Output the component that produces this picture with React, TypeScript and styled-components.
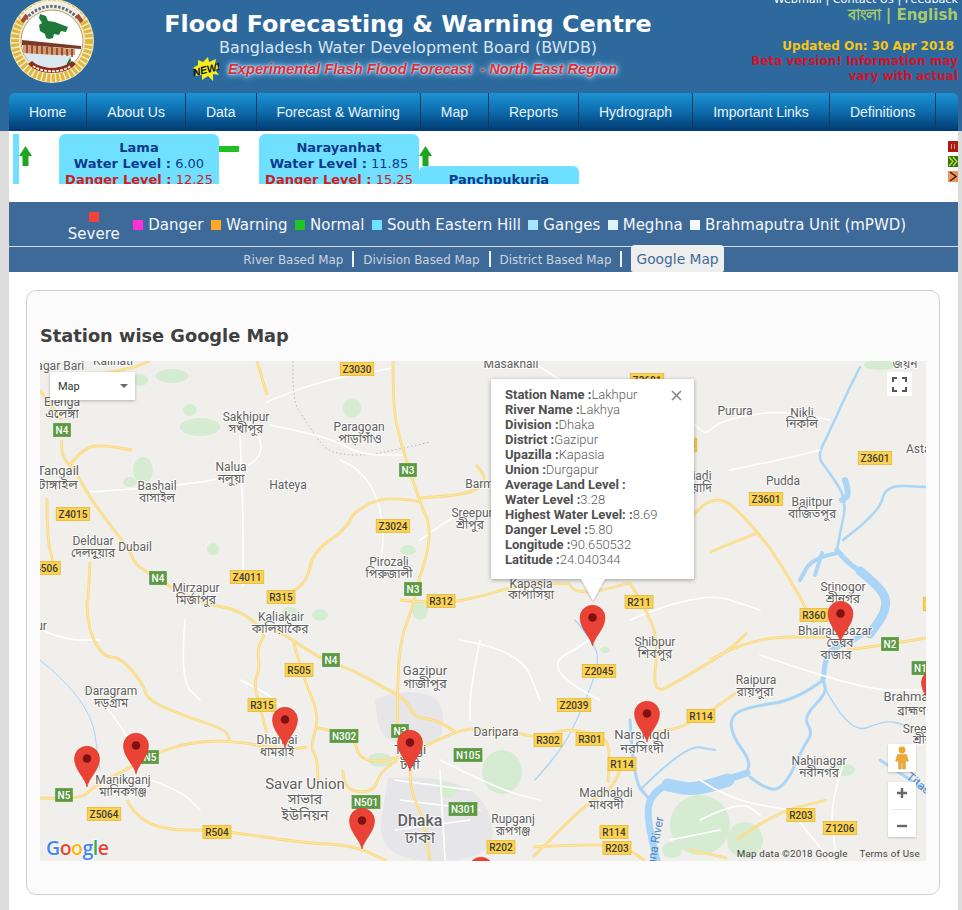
import React from 'react'
import styled, { createGlobalStyle } from 'styled-components'

const GlobalStyle = createGlobalStyle`
  html, body { margin: 0; padding: 0; background: #dcdcdc; }
  body { font-family: "DejaVu Sans", "Noto Sans", sans-serif; }
`

const Page = styled.div`
  width: 962px;
  height: 910px;
  overflow: hidden;
`

const Header = styled.header`
  height: 131px;
  background: #2d699d;
  padding: 0 4px 0 9px;
  box-sizing: border-box;
`

const Banner = styled.div`
  height: 93px;
  display: grid;
  grid-template-columns: 155px 488px 1fr;
  overflow: hidden;
`

const LogoBox = styled.div`
  margin-top: -1px;
`

const TitleBlock = styled.div`
  text-align: center;
  white-space: nowrap;
`

const Title = styled.h1`
  margin: 9px 0 0;
  font-size: 23.8px;
  line-height: 30px;
  font-weight: bold;
  color: #fff;
`

const Subtitle = styled.div`
  font-size: 16px;
  line-height: 18px;
  color: #d8e6f3;
`

const FlashRow = styled.div`
  display: flex;
  align-items: center;
  margin: 0 0 0 29px;
`

const FlashText = styled.span`
  margin-left: 8px;
  font-family: "Liberation Sans", Arial, sans-serif;
  font-size: 14.7px;
  font-weight: bold;
  font-style: italic;
  white-space: pre;
  color: #d5303c;
  text-shadow: 0 0 2px #fff, 0 0 5px #cfe8ff, 0 0 9px #6cc0ff;
`

const SideBlock = styled.div`
  text-align: right;
  font-weight: bold;
  white-space: nowrap;
`

const TopLinks = styled.div`
  margin-top: -7px;
  height: 13px;
  font-size: 11.2px;
  font-weight: normal;
  line-height: 13px;
  color: #fff;
`

const LangLinks = styled.div`
  font-size: 15px;
  line-height: 19px;
  color: #a8c96f;
`

const Updated = styled.div`
  margin-top: 14px;
  padding-right: 4px;
  font-size: 12px;
  line-height: 15px;
  color: #f5c518;
`

const Beta = styled.div`
  width: 212px;
  margin-left: auto;
  font-size: 12px;
  line-height: 15px;
  white-space: normal;
  color: #d0142c;
`

const Nav = styled.nav`
  height: 38px;
  display: flex;
  border-radius: 6px 6px 0 0;
  background: linear-gradient(to bottom, #1b93d3 0%, #0f6fb0 45%, #013a70 100%);
`

const NavItem = styled.a`
  padding: 0 20px;
  display: flex;
  align-items: center;
  border-right: 1px solid #0b3a62;
  font-family: "Liberation Sans", Arial, sans-serif;
  font-size: 14px;
  color: #e8f4fc;
  box-sizing: border-box;
  height: 38px;
`

const Content = styled.main`
  margin: 0 4px 0 9px;
  height: 779px;
  background: #fff;
`

const TickerStrip = styled.div`
  height: 71px;
  padding: 3px 0 0 4px;
  box-sizing: border-box;
  display: flex;
  justify-content: space-between;
`

const TickerClip = styled.div`
  height: 50px;
  width: 900px;
  overflow: hidden;
  display: flex;
  align-items: flex-start;
`

const Sliver = styled.div`
  width: 6px;
  height: 50px;
  background: #6fe0ff;
`

const StationCard = styled.div<{ $drop?: boolean; $pull?: boolean }>`
  flex: none;
  width: 160px;
  height: 60px;
  border-radius: 6px 6px 0 0;
  background: #6fe0ff;
  text-align: center;
  font-size: 13px;
  line-height: 16px;
  margin-top: ${(p) => (p.$drop ? '32px' : '0')};
  margin-left: ${(p) => (p.$pull ? '-12px' : '0')};
  padding-top: 6px;
  box-sizing: border-box;
`

const StationName = styled.div`
  font-weight: bold;
  color: #0b3a8c;
`

const LevelLine = styled.div<{ $danger?: boolean }>`
  color: ${(p) => (p.$danger ? '#d31c1c' : '#0b3a8c')};
  white-space: nowrap;
  b { font-weight: bold; }
`

const TrendSlot = styled.div<{ $w: number }>`
  flex: none;
  width: ${(p) => p.$w}px;
  padding-top: 12px;
  position: relative;
  z-index: 1;
  svg { display: block; }
`

const TickerButtons = styled.div`
  width: 10px;
  padding-top: 7px;
  display: flex;
  flex-direction: column;
  gap: 4px;
`

const TickerButton = styled.div<{ $bg: string }>`
  width: 10px;
  height: 11px;
  background: ${(p) => p.$bg};
  overflow: hidden;
  svg { display: block; }
`

const LegendBar = styled.div`
  background: #3e6a9a;
  height: 70px;
`

const LegendRow = styled.div`
  height: 43px;
  padding: 1px 0 0 7px;
  border-bottom: 1px solid #d3dce6;
  display: flex;
  justify-content: center;
  align-items: center;
  gap: 7.5px;
  font-size: 15px;
  color: #f4f7fa;
  white-space: nowrap;
`

const SevereItem = styled.div`
  display: flex;
  flex-direction: column;
  align-items: center;
  gap: 3px;
  margin: 5px 6px 0 0;
  line-height: 18px;
`

const LegendItem = styled.div`
  display: flex;
  align-items: center;
  gap: 5px;
`

const Swatch = styled.span<{ $color: string }>`
  width: 10px;
  height: 10px;
  background: ${(p) => p.$color};
  display: block;
`

const SubNav = styled.div`
  height: 25px;
  display: flex;
  justify-content: center;
  align-items: flex-end;
  white-space: nowrap;
`

const SubLink = styled.a`
  font-size: 11.9px;
  line-height: 26px;
  color: #ccd5de;
  height: 25px;
`

const SubDivider = styled.span`
  width: 2px;
  height: 16px;
  background: #f0f4f8;
  margin: 0 9px 5px;
`

const ActiveTab = styled.a`
  height: 27px;
  padding: 0 5px;
  line-height: 28px;
  font-size: 13.8px;
  color: #3e6a9a;
  background: #eeeeee;
  border-radius: 4px 4px 2px 2px;
`

const Panel = styled.section`
  margin: 18px 18px 0 17px;
  height: 605px;
  box-sizing: border-box;
  border: 1px solid #cfcfcf;
  border-radius: 10px;
  background: #fbfbfb;
  padding: 0 13px;
`

const PanelTitle = styled.h2`
  margin: 0;
  padding-top: 33px;
  height: 70px;
  box-sizing: border-box;
  font-size: 17.8px;
  line-height: 24px;
  font-weight: bold;
  color: #404040;
`

const MapFrame = styled.div`
  position: relative;
  width: 886px;
  height: 500px;
  overflow: hidden;
  background: #f0efeb;
  font-family: Roboto, "Noto Sans", sans-serif;
`

const MapSvg = styled.svg`
  display: block;
`

const PlaceLabel = styled.text<{ $size?: number; $weight?: number; $water?: boolean }>`
  font-family: Roboto, "Noto Sans", "Noto Sans Bengali", sans-serif;
  font-size: ${(p) => p.$size || 12}px;
  font-weight: ${(p) => p.$weight || 400};
  fill: ${(p) => (p.$water ? '#4f86c6' : '#606060')};
  stroke: #fff;
  stroke-width: ${(p) => (p.$water ? 0 : 2)}px;
  stroke-opacity: 0.75;
  paint-order: stroke;
  text-anchor: middle;
  dominant-baseline: middle;
`

const ShieldText = styled.text<{ $light?: boolean }>`
  font-family: Roboto, sans-serif;
  font-size: 10px;
  font-weight: 500;
  fill: ${(p) => (p.$light ? '#fff' : '#3b3b3b')};
  text-anchor: middle;
  dominant-baseline: central;
`

const GoogleLogo = styled.text`
  font-family: "Open Sans", Roboto, sans-serif;
  font-size: 19.5px;
  font-weight: 600;
  letter-spacing: -0.5px;
  stroke: #fff;
  stroke-width: 2px;
  stroke-opacity: 0.6;
  paint-order: stroke;
`

const MapTypeButton = styled.div`
  position: absolute;
  left: 10px;
  top: 11px;
  width: 85px;
  height: 28px;
  padding: 0 8px;
  box-sizing: border-box;
  background: #fff;
  box-shadow: 0 1px 3px rgba(0, 0, 0, 0.25);
  display: flex;
  align-items: center;
  justify-content: space-between;
  font-size: 11px;
  color: #333;
`

const Caret = styled.span`
  margin-right: -1px;
  border-left: 4px solid transparent;
  border-right: 4px solid transparent;
  border-top: 4px solid #666;
`

const FullscreenButton = styled.div`
  position: absolute;
  left: 847px;
  top: 11px;
  width: 25px;
  height: 24px;
  background: #fff;
  display: flex;
  align-items: center;
  justify-content: center;
`

const Popup = styled.div`
  position: absolute;
  left: 451px;
  top: 18px;
  width: 203px;
  height: 200px;
  box-sizing: border-box;
  padding: 8px 14px;
  background: #fff;
  border-radius: 1px;
  box-shadow: 0 1px 4px rgba(0, 0, 0, 0.35);
  font-size: 13px;
  font-weight: 300;
  line-height: 15px;
  color: #5c5c5c;
  white-space: nowrap;

  &::after {
    content: '';
    position: absolute;
    left: 90px;
    bottom: -22px;
    border-left: 12px solid transparent;
    border-right: 12px solid transparent;
    border-top: 22px solid #fff;
    filter: drop-shadow(0 1px 1px rgba(0, 0, 0, 0.25));
  }

  b {
    font-weight: 700;
    color: #505050;
  }
`

const PopupClose = styled.svg`
  position: absolute;
  right: 12px;
  top: 11px;
`

const PegmanBox = styled.div`
  position: absolute;
  left: 848px;
  top: 383px;
  width: 28px;
  height: 28px;
  background: #fff;
  box-shadow: 0 1px 2px rgba(0, 0, 0, 0.2);
  display: flex;
  align-items: center;
  justify-content: center;
`

const ZoomBox = styled.div`
  position: absolute;
  left: 848px;
  top: 421px;
  width: 28px;
  height: 55px;
  background: #fff;
  box-shadow: 0 1px 2px rgba(0, 0, 0, 0.2);
  display: flex;
  flex-direction: column;
  align-items: center;
  justify-content: space-around;
`

const ZoomDivider = styled.div`
  width: 20px;
  height: 1px;
  background: #e6e6e6;
`

const Attribution = styled.div`
  position: absolute;
  right: 6px;
  bottom: 0;
  display: flex;
  gap: 12px;
  font-size: 9.8px;
  line-height: 14px;
  letter-spacing: 0.2px;
  color: #444;
  white-space: nowrap;
`

// page coordinates, the map group is shifted by the map's own offset
type Pts = number[]

const smooth = (p: Pts) => {
  let d = `M${p[0]} ${p[1]}`
  for (let i = 2; i < p.length - 2; i += 2) {
    const mx = (p[i] + p[i + 2]) / 2
    const my = (p[i + 1] + p[i + 3]) / 2
    d += ` Q${p[i]} ${p[i + 1]} ${mx} ${my}`
  }
  return `${d} L${p[p.length - 2]} ${p[p.length - 1]}`
}

const majorRoads: Pts[] = [
  [393, 361, 393, 408, 400, 440, 410, 472, 420, 502, 430, 525, 428, 552, 417, 585, 413, 607, 400, 640, 397, 700, 398, 730],
  [420, 502, 387, 495, 353, 512, 347, 528, 313, 552, 307, 582, 287, 595],
  [62, 440, 60, 455, 75, 470, 88, 495, 110, 525, 130, 550, 135, 565, 158, 578, 175, 590, 205, 604, 240, 610, 267, 633, 257, 647, 260, 670, 253, 683, 267, 733],
  [267, 625, 293, 640, 323, 660, 353, 670, 383, 687, 407, 700, 413, 717, 437, 720, 457, 733],
  [293, 640, 303, 677, 320, 717, 310, 747, 317, 757, 318, 780],
  [317, 728, 353, 733, 360, 762, 397, 760, 437, 740, 467, 728, 490, 730, 518, 733],
  [40, 798, 80, 800, 93, 787, 125, 770, 157, 753, 187, 743, 227, 740, 287, 750, 307, 747],
  [87, 600, 87, 627, 103, 657, 120, 657, 143, 683, 147, 700, 187, 717, 227, 730, 230, 743],
  [127, 800, 133, 813, 160, 830, 220, 830, 303, 843, 353, 845, 387, 861],
  [410, 770, 410, 790, 423, 817, 430, 861],
  [343, 770, 343, 790, 373, 793, 380, 773, 397, 760],
  [630, 583, 653, 620, 657, 650, 653, 695, 680, 680, 727, 652, 747, 633],
  [690, 520, 713, 487, 757, 530, 783, 567, 807, 610, 813, 623],
  [710, 552, 757, 533],
  [710, 660, 750, 637, 827, 637],
  [847, 650, 890, 644, 926, 638],
  [400, 600, 440, 604, 480, 597, 510, 587, 570, 582, 572, 590, 590, 593, 630, 583],
  [737, 692, 693, 725, 653, 733],
  [518, 733, 540, 740, 565, 728, 600, 735, 610, 745, 608, 783],
  [623, 763, 613, 790, 590, 800, 533, 857],
  [533, 847, 603, 843, 630, 850, 645, 861],
  [737, 840, 773, 813, 827, 800],
  [690, 850, 727, 858],
  [257, 361, 267, 395],
  [100, 374, 133, 368, 150, 361],
  [40, 390, 43, 395, 62, 420],
  [70, 465, 83, 448, 103, 445, 132, 450],
  [47, 498, 47, 538, 53, 562],
  [90, 562, 88, 600],
  [476, 465, 490, 480, 470, 494, 420, 498],
]

const minorRoads: Pts[] = [
  [267, 402, 313, 382, 393, 368],
  [240, 435, 243, 500, 243, 585],
  [250, 425, 270, 448, 237, 475, 187, 485, 90, 492],
  [270, 425, 330, 437, 360, 455, 405, 455],
  [340, 460, 365, 470, 385, 520, 380, 570],
  [420, 540, 460, 510, 490, 510],
  [680, 400, 700, 440, 720, 420, 780, 410, 830, 420],
  [730, 470, 780, 460, 820, 450],
  [630, 620, 700, 590, 760, 610],
  [600, 700, 540, 670, 590, 640],
  [300, 730, 280, 700, 240, 680],
  [100, 700, 130, 735, 130, 760],
  [150, 780, 180, 790, 200, 810],
  [185, 620, 180, 680, 200, 700],
  [460, 640, 520, 650, 540, 700],
  [440, 760, 500, 790, 540, 800],
  [790, 810, 830, 860],
  [700, 780, 730, 800, 790, 810],
  [760, 655, 860, 690, 920, 690],
  [845, 760, 830, 800, 835, 850],
  [20, 620, 60, 640, 100, 640],
  [395, 780, 470, 790],
  [400, 800, 480, 810],
  [395, 830, 470, 820],
  [440, 770, 445, 860],
  [480, 640, 470, 690, 470, 720],
  [700, 820, 740, 800, 760, 815],
  [670, 840, 720, 830],
  [560, 380, 530, 360],
]

const rivers: { p: Pts; w: number }[] = [
  { p: [837, 550, 847, 563, 870, 577, 890, 597, 880, 623, 850, 643, 827, 650, 823, 680], w: 5 },
  { p: [860, 571, 884, 590, 887, 610, 870, 634], w: 9 },
  { p: [823, 680, 797, 700, 747, 707, 730, 717, 733, 737, 750, 760, 747, 773], w: 3 },
  { p: [747, 773, 697, 790, 667, 783, 650, 797, 647, 817, 657, 861], w: 7 },
  { p: [728, 780, 697, 791, 668, 785], w: 13 },
  { p: [750, 777, 770, 793, 787, 783, 803, 747, 813, 733, 803, 717, 827, 693, 823, 680], w: 3 },
  { p: [837, 550, 840, 533, 847, 500, 830, 473, 817, 457, 827, 437, 847, 393, 860, 367], w: 2.5 },
  { p: [837, 553, 812, 558, 800, 580], w: 4 },
  { p: [815, 575, 822, 553], w: 4 },
  { p: [843, 540, 880, 512, 885, 485, 926, 487], w: 2.5 },
  { p: [640, 790, 685, 745, 715, 750], w: 2 },
  { p: [826, 690, 850, 735, 885, 720, 905, 725], w: 1.5 },
  { p: [630, 720, 633, 780, 650, 800], w: 3 },
  { p: [575, 620, 592, 640, 600, 661, 586, 700, 565, 745, 535, 780], w: 1.2 },
  { p: [40, 660, 90, 700, 100, 770], w: 1 },
  { p: [880, 760, 926, 790], w: 3 },
  { p: [845, 480, 850, 495, 842, 500], w: 6 },
]

const greens: [number, number, number, number][] = [
  [172, 376, 16, 7], [140, 380, 8, 6], [200, 427, 20, 9], [190, 410, 7, 6], [143, 470, 10, 13], [130, 482, 7, 5],
  [352, 408, 9, 10], [213, 549, 6, 6], [408, 550, 8, 5], [320, 615, 8, 6],
  [420, 610, 8, 10], [90, 690, 6, 4], [380, 760, 12, 7], [502, 772, 20, 22],
  [700, 825, 30, 30], [745, 840, 18, 18], [672, 850, 10, 8], [845, 770, 10, 6],
  [605, 650, 5, 3], [448, 790, 10, 8], [880, 365, 16, 5], [290, 612, 8, 5],
]

const urban: Pts[] = [
  [375, 700, 395, 690, 440, 695, 445, 730, 430, 750, 380, 740],
  [388, 778, 440, 775, 490, 800, 495, 861, 375, 861],
]

const places: [string, number, number, number?, number?][] = [
  ['Nagar Bari', 56, 367], ['Kalihati', 113, 362],
  ['Elenga', 62, 403], ['এলেঙ্গা', 62, 415],
  ['Sakhipur', 246, 418], ['সখীপুর', 246, 430],
  ['Paragoan', 359, 428], ['পাড়াগাঁও', 360, 440],
  ['Barmi', 481, 485], ['Tangail', 58, 472, 13], ['টাঙ্গাইল', 58, 486, 13],
  ['Nalua', 231, 468], ['নলুয়া', 231, 480], ['Hateya', 288, 486],
  ['Bashail', 157, 487], ['বাসাইল', 157, 499],
  ['Sreepur', 472, 514], ['শ্রীপুর', 470, 526],
  ['Delduar', 93, 542], ['দেলদুয়ার', 93, 554], ['Dubail', 135, 548],
  ['Pirozali', 389, 563], ['পিরুজালী', 389, 575],
  ['Mirzapur', 196, 589], ['মির্জাপুর', 196, 601],
  ['Nagarpur', 22, 627], ['Kaliakair', 281, 618], ['কালিয়াকৈর', 280, 630],
  ['Gazipur', 425, 672, 13], ['গাজীপুর', 425, 685, 13],
  ['Daragram', 111, 692], ['দড়গ্রাম', 111, 704],
  ['Daripara', 496, 733], ['Dhanrai', 277, 741], ['ধামরাই', 277, 753],
  ['Tongi', 410, 751, 13], ['টঙ্গী', 410, 766, 13],
  ['Manikganj', 123, 781], ['মানিকগঞ্জ', 123, 793],
  ['Savar Union', 305, 785, 15], ['সাভার', 305, 800, 14], ['ইউনিয়ন', 305, 816, 14],
  ['Dhaka', 420, 822, 16, 500], ['ঢাকা', 420, 839, 16],
  ['Masakhali', 511, 365], ['জয়ন', 905, 365],
  ['Purura', 735, 412], ['Nikli', 802, 414], ['নিকলি', 802, 425],
  ['Astagram', 932, 450], ['Katiadi', 693, 477], ['কটিয়াদি', 692, 489],
  ['Pudda', 783, 482], ['Bajitpur', 812, 503], ['বাজিতপুর', 812, 515],
  ['Kapasia', 531, 585], ['কাপাসিয়া', 531, 596],
  ['Srinogor', 843, 588], ['শ্রীনগর', 843, 600],
  ['Bhairab Bazar', 835, 632], ['ভৈরব', 840, 644], ['বাজার', 836, 656],
  ['Shibpur', 655, 643], ['শিবপুর', 655, 655],
  ['Raipura', 756, 681], ['রায়পুরা', 755, 693],
  ['Brahmanbaria', 924, 698, 13], ['ব্রাহ্মণবাড়িয়া', 928, 712],
  ['Sreenagar', 930, 730], ['শ্রীনগর', 930, 741],
  ['Narsingdi', 642, 736, 13], ['নরসিংদী', 642, 750, 13],
  ['Nabinagar', 819, 762], ['নবীনগর', 819, 774],
  ['Madhabdi', 606, 794], ['মাধবদী', 606, 806],
  ['Rupganj', 513, 820], ['রূপগঞ্জ', 513, 832],
]

const yellowShields: [string, number, number][] = [
  ['Z3030', 357, 369], ['Z4015', 73, 514], ['Z3024', 393, 526], ['Z4506', 43.5, 568],
  ['Z4011', 247, 577], ['R315', 281, 597], ['R312', 441, 601], ['R505', 299, 670],
  ['R315', 262, 705], ['Z5064', 104, 814], ['R504', 217, 832], ['Z3601', 875, 458],
  ['Z3601', 766, 499], ['R211', 639, 602], ['R360', 814, 615], ['Z2045', 599, 671],
  ['Z2039', 574, 705], ['R114', 701, 716], ['R302', 548, 740], ['R301', 590, 739],
  ['R114', 622, 764], ['R203', 801, 815], ['Z1206', 840, 828], ['R114', 614, 832],
  ['R203', 617, 848], ['R202', 501, 847], ['Z3601', 647, 380], ['Z3601', 940, 604],
  ['Z3024', 680, 445],
]

const greenShields: [string, number, number][] = [
  ['N4', 62, 430], ['N3', 408, 470], ['N4', 158, 578], ['N3', 413, 589],
  ['N4', 331, 660], ['N302', 344, 736], ['N3', 400, 731], ['N105', 468, 755],
  ['N5', 150, 757], ['N5', 64, 795], ['N501', 366, 802], ['N301', 463, 809],
  ['N2', 890, 644], ['N102', 926, 668],
]

const pinSpots: [number, number][] = [
  [592.5, 646], [840.5, 642], [285, 748], [410, 771], [362, 849],
  [136, 774], [87, 787], [647, 742], [934, 711], [481, 898],
]

const Shield = ({ label, x, y, green }: { label: string; x: number; y: number; green?: boolean }) => {
  const w = label.length * 5.6 + 5.5
  return (
    <g>
      <rect
        x={x - w / 2}
        y={y - 6.5}
        width={w}
        height={13}
        fill={green ? '#5c9a44' : '#fdd24f'}
        stroke={green ? '#5c9a44' : '#e0b93c'}
        strokeWidth={0.8}
      />
      <ShieldText x={x} y={y} $light={green}>
        {label}
      </ShieldText>
    </g>
  )
}

const Pin = ({ x, y }: { x: number; y: number }) => (
  <g transform={`translate(${x} ${y})`}>
    <path
      d="M0 0C-1.6-9-12.5-17-12.5-28.3A12.5 12.5 0 1 1 12.5-28.3C12.5-17 1.6-9 0 0Z"
      fill="#ea4335"
      stroke="#d23a2d"
      strokeWidth={0.6}
    />
    <circle cx={0} cy={-28.5} r={4.3} fill="#7e1210" />
  </g>
)

const MapCanvas = () => (
  <MapSvg width={886} height={500} viewBox="40 361 886 500">
    <rect x={40} y={361} width={886} height={500} fill="#f0efeb" />
    {urban.map((u, i) => (
      <path key={i} d={smooth([...u, u[0], u[1]])} fill="#e6e6e8" />
    ))}
    {greens.map(([cx, cy, rx, ry], i) => (
      <ellipse key={i} cx={cx} cy={cy} rx={rx} ry={ry} fill="#d6ecd2" />
    ))}
    {rivers.map((r, i) => (
      <path key={i} d={smooth(r.p)} fill="none" stroke="#aad5f6" strokeWidth={r.w} strokeLinecap="round" />
    ))}
    <path
      d={smooth([293, 361, 292, 400, 305, 420, 325, 450, 345, 455, 370, 455, 395, 450, 430, 442])}
      fill="none"
      stroke="#b5b2aa"
      strokeWidth={1}
      strokeDasharray="1.5 2.5"
    />
    {minorRoads.map((r, i) => (
      <path key={i} d={smooth(r)} fill="none" stroke="#fff" strokeWidth={1.6} strokeLinecap="round" />
    ))}
    {majorRoads.map((r, i) => (
      <path key={i} d={smooth(r)} fill="none" stroke="#fbd97f" strokeWidth={2.8} strokeLinejoin="round" />
    ))}
    {majorRoads.map((r, i) => (
      <path key={i} d={smooth(r)} fill="none" stroke="#fdeab4" strokeWidth={0.8} strokeLinejoin="round" />
    ))}
    {places.map(([name, x, y, size, weight], i) => (
      <PlaceLabel key={i} x={x} y={y} $size={size} $weight={weight}>
        {name}
      </PlaceLabel>
    ))}
    <PlaceLabel x={654} y={853} transform="rotate(-80 654 853)" $water>
      Meghna River
    </PlaceLabel>
    <PlaceLabel x={918} y={784} transform="rotate(38 918 784)" $water>
      Titas
    </PlaceLabel>
    {yellowShields.map(([label, x, y], i) => (
      <Shield key={i} label={label} x={x} y={y} />
    ))}
    {greenShields.map(([label, x, y], i) => (
      <Shield key={i} label={label} x={x} y={y} green />
    ))}
    {pinSpots.map(([x, y], i) => (
      <Pin key={i} x={x} y={y} />
    ))}
    <GoogleLogo x={46} y={855}>
      <tspan fill="#4285f4">G</tspan>
      <tspan fill="#ea4335">o</tspan>
      <tspan fill="#fbbc05">o</tspan>
      <tspan fill="#4285f4">g</tspan>
      <tspan fill="#34a853">l</tspan>
      <tspan fill="#ea4335">e</tspan>
    </GoogleLogo>
  </MapSvg>
)

const LogoMark = () => (
  <svg width={86} height={84} viewBox="0 0 86 84">
    <circle cx={43} cy={42} r={42} fill="#f3e9c4" />
    <circle cx={43} cy={42} r={37} fill="none" stroke="#dfb63e" strokeWidth={8} strokeDasharray="3 1.6" />
    <path d="M14 21A35 35 0 0 1 72 21" stroke="#f4efe0" strokeWidth={8} fill="none" />
    <path d="M17 20A33 33 0 0 1 69 20" stroke="#5a6e8a" strokeWidth={3} fill="none" strokeDasharray="2.5 1.5" />
    <path d="M13 23l5-7M73 23l-5-7" stroke="#a84a32" strokeWidth={4} />
    <circle cx={43} cy={42} r={31} fill="#fff" stroke="#a08a5a" strokeWidth={0.8} />
    <path d="M31 15l6 2 2 5 7 1 5 2 8 3-2 5-5-1-2 4-5-1-1 4-4 1-3-1-1-4-5-3-1-6 3-2-3-5z" fill="#1f7a3a" />
    <path d="M58 56l3 1 1 5-3 5-3-4z" fill="#1f7a3a" />
    <path d="M13 41L72 47V50L13 46z" fill="#7a3a28" />
    <path d="M14 46L66 50V56H14z" fill="#d49a70" />
    <path d="M18 46v9M23 46v9M28 47v9M33 47v9M38 48v8M43 48v8M48 49v8M53 49v8M58 50v8M63 50v8" stroke="#8a3e2a" strokeWidth={1.6} />
    <path d="M14 54L62 57 56 68H24z" fill="#dbe7ee" />
    <path d="M19 65C30 77 56 77 67 65L63 62C54 71 32 71 23 62z" fill="#8a2c1c" />
    <path d="M24 67C34 74 52 74 62 67" stroke="#f2e6d8" strokeWidth={2} fill="none" strokeDasharray="3 1" />
  </svg>
)

const NewBadge = () => (
  <svg width={27} height={24} viewBox="0 0 27 24">
    <polygon
      points="5,3 10,5 15,0 16,5 23,2 22,7 27,10 22,13 26,18 20,17 20,24 15,19 9,23 9,18 2,19 5,14 0,11 5,8"
      fill="#f5ef20"
    />
    <text x={13.5} y={16} textAnchor="middle" fontFamily="Liberation Sans" fontSize={10.5} fontWeight={700} fontStyle="italic" transform="rotate(-14 14 13)" fill="#111">
      NEW!
    </text>
  </svg>
)

const UpArrow = () => (
  <svg width={13} height={20} viewBox="0 0 13 20">
    <path d="M6.5 0L13 10H9.5V20H3.5V10H0Z" fill="#1fa51f" />
  </svg>
)

const FlatMark = () => (
  <svg width={20} height={6} viewBox="0 0 20 6">
    <rect width={20} height={6} fill="#21c021" />
  </svg>
)

const Pegman = () => (
  <svg width={14} height={24} viewBox="0 0 14 24">
    <circle cx={7} cy={4} r={3.4} fill="#f5a623" />
    <path d="M2.5 8.5h9l2 6.5-1.8.6-1.2-3v10.4H7.6v-6H6.4v6H3.5V12.6l-1.2 3L.5 15z" fill="#f5a623" stroke="#b8a070" strokeWidth={0.5} />
  </svg>
)

const stations = [
  { name: 'Lama', water: '6.00', danger: '12.25' },
  { name: 'Narayanhat', water: '11.85', danger: '15.25' },
]

const StationBody = ({ name, water, danger }: { name: string; water: string; danger: string }) => (
  <>
    <StationName>{name}</StationName>
    <LevelLine>
      <b>Water Level :</b> {water}
    </LevelLine>
    <LevelLine $danger>
      <b>Danger Level :</b> {danger}
    </LevelLine>
  </>
)

const legend = [
  { label: 'Danger', color: '#ff2fd5' },
  { label: 'Warning', color: '#ffa726' },
  { label: 'Normal', color: '#22c322' },
  { label: 'South Eastern Hill', color: '#6fe0ff' },
  { label: 'Ganges', color: '#a6e4ff' },
  { label: 'Meghna', color: '#e0f4fb' },
  { label: 'Brahmaputra Unit (mPWD)', color: '#f3f9fb' },
]

const popupRows = [
  ['Station Name :', 'Lakhpur'],
  ['River Name :', 'Lakhya'],
  ['Division :', 'Dhaka'],
  ['District :', 'Gazipur'],
  ['Upazilla :', 'Kapasia'],
  ['Union :', 'Durgapur'],
  ['Average Land Level :', ''],
  ['Water Level :', '3.28'],
  ['Highest Water Level: :', '8.69'],
  ['Danger Level :', '5.80'],
  ['Longitude :', '90.650532'],
  ['Latitude :', '24.040344'],
]

const navItems = ['Home', 'About Us', 'Data', 'Forecast & Warning', 'Map', 'Reports', 'Hydrograph', 'Important Links', 'Definitions']

export default function App() {
  return (
    <Page>
      <GlobalStyle />
      <Header>
        <Banner>
          <LogoBox>
            <LogoMark />
          </LogoBox>
          <TitleBlock>
            <Title>Flood Forecasting &amp; Warning Centre</Title>
            <Subtitle>Bangladesh Water Development Board (BWDB)</Subtitle>
            <FlashRow>
              <NewBadge />
              <FlashText>Experimental Flash Flood Forecast  - North East Region</FlashText>
            </FlashRow>
          </TitleBlock>
          <SideBlock>
            <TopLinks>Webmail | Contact Us | Feedback</TopLinks>
            <LangLinks>বাংলা | English</LangLinks>
            <Updated>Updated On: 30 Apr 2018</Updated>
            <Beta>Beta version! Information may vary with actual</Beta>
          </SideBlock>
        </Banner>
        <Nav>
          {navItems.map((item) => (
            <NavItem key={item}>{item}</NavItem>
          ))}
        </Nav>
      </Header>
      <Content>
        <TickerStrip>
          <TickerClip>
            <Sliver />
            <TrendSlot $w={40}>
              <UpArrow />
            </TrendSlot>
            <StationCard>
              <StationBody {...stations[0]} />
            </StationCard>
            <TrendSlot $w={40}>
              <FlatMark />
            </TrendSlot>
            <StationCard>
              <StationBody {...stations[1]} />
            </StationCard>
            <TrendSlot $w={12}>
              <UpArrow />
            </TrendSlot>
            <StationCard $drop $pull>
              <StationName>Panchpukuria</StationName>
            </StationCard>
          </TickerClip>
          <TickerButtons>
            <TickerButton $bg="#a81c14">
              <svg width={10} height={11} viewBox="0 0 10 11">
                <path d="M3.5 3v5M6.5 3v5" stroke="#dd8f80" strokeWidth={1} />
              </svg>
            </TickerButton>
            <TickerButton $bg="#2a7a12">
              <svg width={10} height={11} viewBox="0 0 10 11">
                <path d="M1 1l4 4.5-4 4.5M5 1l4 4.5-4 4.5" stroke="#d8d83a" strokeWidth={1.2} fill="none" />
              </svg>
            </TickerButton>
            <TickerButton $bg="#f39157">
              <svg width={10} height={11} viewBox="0 0 10 11">
                <path d="M2 1l6 4.5-6 4.5" stroke="#222" strokeWidth={1.4} fill="none" />
              </svg>
            </TickerButton>
          </TickerButtons>
        </TickerStrip>
        <LegendBar>
          <LegendRow>
            <SevereItem>
              <Swatch $color="#f44336" />
              Severe
            </SevereItem>
            {legend.map((l) => (
              <LegendItem key={l.label}>
                <Swatch $color={l.color} />
                {l.label}
              </LegendItem>
            ))}
          </LegendRow>
          <SubNav>
            <SubLink>River Based Map</SubLink>
            <SubDivider />
            <SubLink>Division Based Map</SubLink>
            <SubDivider />
            <SubLink>District Based Map</SubLink>
            <SubDivider />
            <ActiveTab>Google Map</ActiveTab>
          </SubNav>
        </LegendBar>
        <Panel>
          <PanelTitle>Station wise Google Map</PanelTitle>
          <MapFrame>
            <MapCanvas />
            <MapTypeButton>
              Map
              <Caret />
            </MapTypeButton>
            <FullscreenButton>
              <svg width={15} height={15} viewBox="0 0 15 15">
                <path d="M1 5V1h4M10 1h4v4M14 10v4h-4M5 14H1v-4" stroke="#555" strokeWidth={2} fill="none" />
              </svg>
            </FullscreenButton>
            <Popup>
              {popupRows.map(([k, v]) => (
                <div key={k}>
                  <b>{k}</b>
                  {v}
                </div>
              ))}
              <PopupClose width={11} height={11} viewBox="0 0 11 11">
                <path d="M1 1l9 9M10 1l-9 9" stroke="#8a8a8a" strokeWidth={1.6} />
              </PopupClose>
            </Popup>
            <PegmanBox>
              <Pegman />
            </PegmanBox>
            <ZoomBox>
              <svg width={12} height={12} viewBox="0 0 12 12">
                <path d="M6 1v10M1 6h10" stroke="#666" strokeWidth={2.4} />
              </svg>
              <ZoomDivider />
              <svg width={12} height={12} viewBox="0 0 12 12">
                <path d="M1 6h10" stroke="#666" strokeWidth={2.4} />
              </svg>
            </ZoomBox>
            <Attribution>
              <span>Map data ©2018 Google</span>
              <span>Terms of Use</span>
            </Attribution>
          </MapFrame>
        </Panel>
      </Content>
    </Page>
  )
}
